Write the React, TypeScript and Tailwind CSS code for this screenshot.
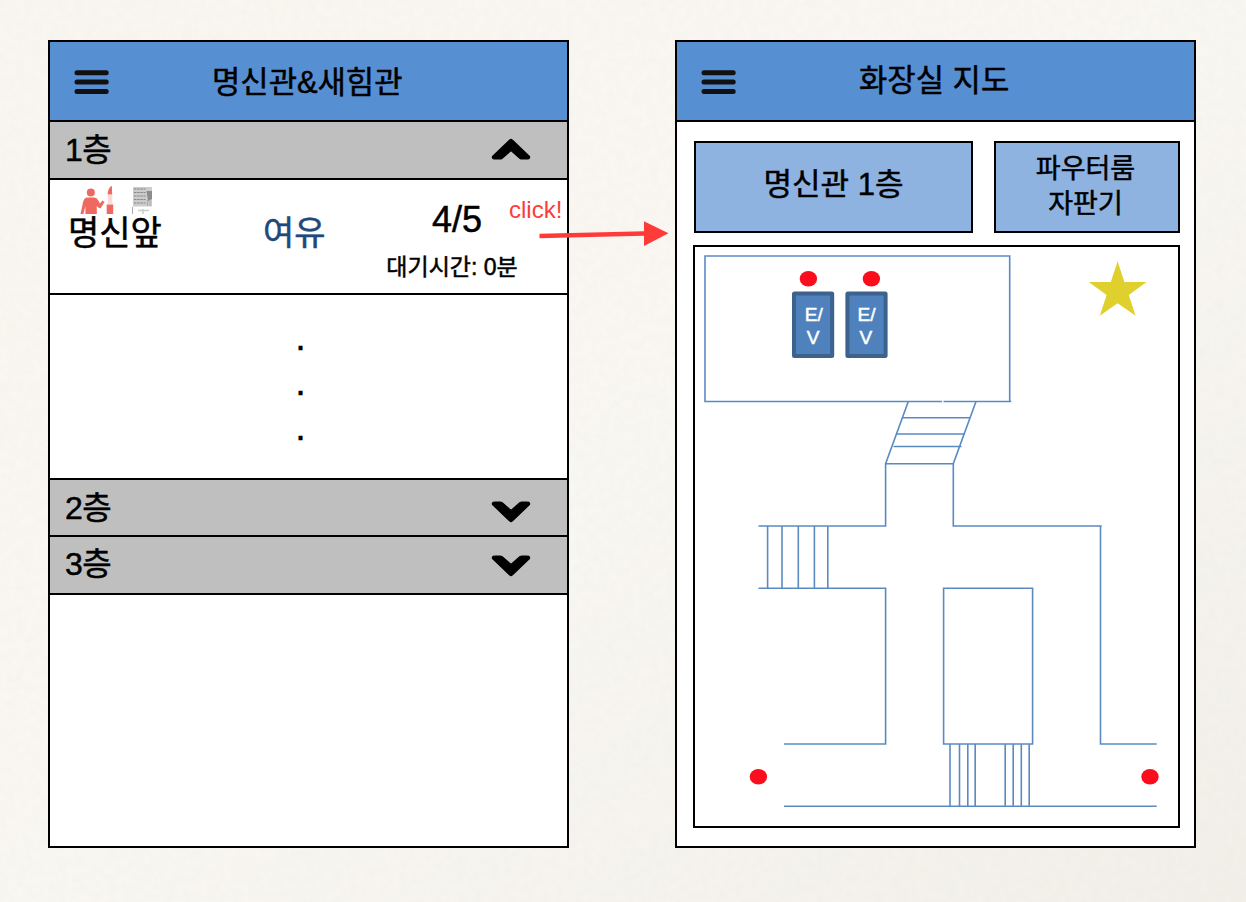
import type { ReactNode } from "react";

function MenuIcon() {
  return (
    <svg viewBox="0 0 40 30" className="h-[30px] w-10 blur-[0.6px]" stroke="#111" strokeWidth="5" strokeLinecap="round">
      <path d="M5 5.8H34.2M5 15.1H34.2M5 24.6H34.2" />
    </svg>
  );
}

function Chevron({ up = false }: { up?: boolean }) {
  return (
    <svg viewBox="0 0 40 24" className={up ? "h-6 w-10" : "h-6 w-10 rotate-180"}>
      <path
        d="M20 2.3L22 3.6L38.2 19.2Q39.2 20.6 37.9 21.6Q37 22 35.5 22H31Q29.8 22 28.8 21.2L20 13.6L11.2 21.2Q10.2 22 9 22H4.5Q3 22 2.1 21.6Q.8 20.6 1.8 19.2L18 3.6Z"
        stroke="#000"
        strokeWidth="1.2"
        strokeLinejoin="round"
      />
    </svg>
  );
}

function PowderRoomIcon() {
  return (
    <svg viewBox="0 0 36 32" className="h-8 w-9 shrink-0 blur-[0.4px]" fill="#ee6a61">
      <circle cx="10.8" cy="7.4" r="4" />
      <path d="M.5 29L3 17.5Q4 12.5 7.5 12.5H14Q17 12.7 18.3 15.5L20 18.6L22.3 15.5L24.6 17L20.8 23Q19.5 24 18 22.3L16.8 21V29H5.4V21L3.5 29Z" />
      <path d="M27.5 9.5Q28 3 31.8 .8L32.2 9.5Z" />
      <path d="M27.7 10H32.3V19H27.7Z" opacity=".25" />
      <path d="M26.7 19.5H33.2V29H26.7Z" />
    </svg>
  );
}

function VendingIcon() {
  return (
    <svg viewBox="0 0 24 30" className="h-[30px] w-6 shrink-0 blur-[0.6px]">
      <path d="M2 2H21V21.5H2Z" fill="#ccc" />
      <path d="M3 4H14.5M3 7.5H14.5M3 11H14.5M3 14.5H14.5M3 18H14.5" stroke="#888" strokeWidth="1.2" strokeDasharray="2.5 .7" />
      <path d="M15.5 6H21V14L17 16Z" fill="#8c8c8c" />
      <path d="M16.5 15V21M19 15V21M1.5 22V29" stroke="#aaa" strokeWidth="1" />
      <path d="M7 25.5H18M12 24V29" stroke="#ccc" strokeWidth="1.5" />
    </svg>
  );
}

function FloorRow({ name, open, className, chevronClass }: { name: string; open?: boolean; className: string; chevronClass: string }) {
  return (
    <div className={`flex justify-between border-b-2 border-black bg-[#bfbfbf] pl-[15px] pr-[36px] text-[32px] ${className}`}>
      <span className="tracking-[-0.5px]">{name}</span>
      <span className={chevronClass}>
        <Chevron up={open} />
      </span>
    </div>
  );
}

function Phone({ children }: { children: ReactNode }) {
  return <section className="flex h-[808px] w-[521px] flex-col border-2 border-black bg-white">{children}</section>;
}

function FloorMap() {
  return (
    <svg viewBox="695 247 483 579" preserveAspectRatio="none" className="h-full w-full">
      <g fill="none" stroke="#5a8ac4" strokeWidth="1.6">
        <path d="M942 401.5H705V256H1009.7V401.5M943.5 401.5H1011.3" />
        <path d="M908.3 401.5L885.6 463.7V526H758.5M976 401.5L953.3 463.7V526H1101.7" />
        <path d="M902.5 417.7H970M896.5 434H964.5M893.5 446.5H961.5M885.6 463.7H953.3" />
        <path d="M767.6 526V588M782 526V588M798.3 526V588M814.4 526V588M827.8 526V588" />
        <path d="M758.5 588.3H885.6V744H784M943.6 588.3H1032.6V744H943.6ZM1100.5 526V744H1156.7M784 806.2H1156.7" />
        <path d="M950 744V806M959.5 744V806M967.8 744V806M975.2 744V806M1005.2 744V806M1013.2 744V806M1021.3 744V806M1029.2 744V806" />
      </g>
      <g fill="#fc0d1b">
        <ellipse cx="808.4" cy="278.8" rx="8.7" ry="7.8" />
        <ellipse cx="871.4" cy="278.8" rx="8.7" ry="7.8" />
        <ellipse cx="758.4" cy="776.8" rx="8.7" ry="7.8" />
        <ellipse cx="1150" cy="776.8" rx="8.7" ry="7.8" />
      </g>
      <g fill="#4f81bd" stroke="#3d628d" strokeWidth="4">
        <rect x="794" y="293.5" width="38.2" height="62.5" rx="0.5" />
        <rect x="847.4" y="293.5" width="38.2" height="62.5" rx="0.5" />
      </g>
      <g fill="#fff" stroke="#fff" strokeWidth="0.5" fontSize="19" textAnchor="middle">
        <text x="813.8" y="321">E/</text>
        <text x="813" y="344">V</text>
        <text x="866.6" y="321">E/</text>
        <text x="865.8" y="344">V</text>
      </g>
      <path fill="#dfd02e" d="M1117.6 261.2L1124.4 282H1146.6L1128.8 295L1135.6 315.8L1117.6 303.2L1099.8 315.8L1106.6 295L1088.8 282H1110.8Z" />
    </svg>
  );
}

export default function App() {
  return (
    <main className="relative flex h-[902px] w-[1246px] gap-[106px] overflow-hidden bg-linear-to-br from-[#f9f6f0] via-[#f9f7f2] to-[#f2efe9] pl-12 pt-10 font-['Liberation_Sans','Noto_Sans_CJK_KR',sans-serif] text-black">
      <svg className="absolute inset-0 h-full w-full" aria-hidden="true">
        <filter id="paper">
          <feTurbulence type="fractalNoise" baseFrequency="0.12" numOctaves="3" seed="4" />
          <feColorMatrix values="0 0 0 0 .72  0 0 0 0 .70  0 0 0 0 .66  .4 0 0 0 -.14" />
        </filter>
        <rect width="100%" height="100%" filter="url(#paper)" opacity=".5" />
      </svg>

      <div className="relative [-webkit-text-stroke:0.5px]">
        <Phone>
          <header className="flex h-20 shrink-0 border-b-2 border-black bg-[#578fd3]">
            <div className="w-[162px] pl-[22px] pt-[25px]"><MenuIcon /></div>
            <h1 className="text-[30.8px] leading-[82px]">명신관&amp;새힘관</h1>
          </header>
          <FloorRow name="1층" open className="h-[58px] leading-[56px]" chevronClass="pt-[15px]" />
          <div className="flex h-[115px] border-b-2 border-black">
            <div className="w-[212px] pl-[18px]">
              <div className="flex h-[28px] gap-[15px] pl-[12px] pt-[5px]"><PowderRoomIcon /><VendingIcon /></div>
              <div className="relative text-[34px] leading-[50px]">명신앞</div>
            </div>
            <div className="w-[118px] pl-px pt-[28px] text-[34px] leading-[50px] text-[#1f497d]">여유</div>
            <div className="w-[144px] text-center">
              <div className="pl-[10px] pt-[18px] text-[36px] leading-[44px]">4/5</div>
              <div className="pt-[8px] text-[23px] leading-[34px]">대기시간: 0분</div>
            </div>
          </div>
          <div className="flex h-[185px] flex-col items-center border-b-2 border-black pr-[16px] pt-[20px] text-[36px] leading-[45px]">
            <span>.</span><span>.</span><span>.</span>
          </div>
          <FloorRow name="2층" className="h-[57px] leading-[57px]" chevronClass="pt-[20px]" />
          <FloorRow name="3층" className="h-[58px] leading-[54px]" chevronClass="pt-[17px]" />
        </Phone>
        <div className="absolute left-[461px] top-[156px] text-2xl leading-7 text-[#ff3b3a] [-webkit-text-stroke:0]">click!</div>
        <svg viewBox="538 218 134 32" className="absolute left-[490px] top-[178px] h-8 w-[134px]" fill="#ff3b3a">
          <path d="M539.5 233.7L644 231.3V221.3L668.5 233.2L644 246V235.7L539.5 238.2Z" />
        </svg>
      </div>

      <div className="relative [-webkit-text-stroke:0.5px]">
        <Phone>
          <header className="flex h-20 shrink-0 border-b-2 border-black bg-[#578fd3]">
            <div className="w-[182px] pl-[22px] pt-[25px]"><MenuIcon /></div>
            <h1 className="text-[30.8px] leading-[78px]">화장실 지도</h1>
          </header>
          <div className="flex grow flex-col gap-3 pb-[18px] pl-[16px] pr-[14px] pt-[19px]">
            <div className="flex h-[92px] justify-between pl-px">
              <button className="w-[279px] border-2 border-black bg-[#8fb3e1] pb-[3px] text-[31px]">명신관 1층</button>
              <button className="w-[186px] border-2 border-black bg-[#8fb3e1] pr-[3px] text-[27px] leading-[35px]">파우터룸<br />자판기</button>
            </div>
            <div className="h-[583px] border-2 border-black bg-white"><FloorMap /></div>
          </div>
        </Phone>
      </div>
    </main>
  );
}
